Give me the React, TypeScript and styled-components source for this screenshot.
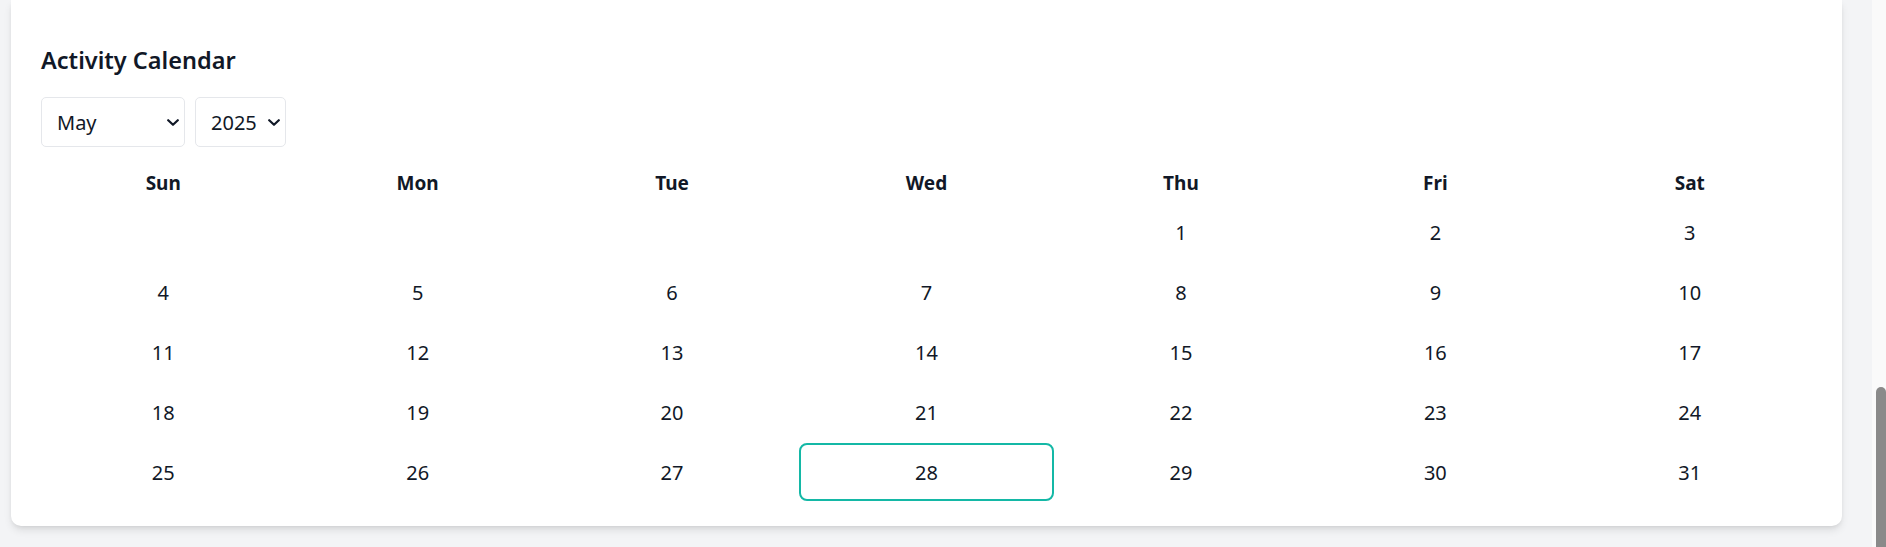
import React from "react";
import styled, { createGlobalStyle } from "styled-components";

const GlobalStyle = createGlobalStyle`
  html, body {
    margin: 0;
    padding: 0;
    background: #f3f4f6;
    overflow: hidden;
  }
  body {
    font-family: "Noto Sans", "Open Sans", Arial, sans-serif;
    color: #111827;
  }
  * { box-sizing: border-box; }
`;

const Page = styled.div`
  display: flex;
  height: 100vh;
  width: 100vw;
`;

const Main = styled.main`
  flex: 1;
  display: flex;
  flex-direction: column;
  justify-content: flex-end;
  padding: 0 30px 21px 11px;
`;

const Card = styled.section`
  background: #ffffff;
  border-radius: 0 0 10px 10px;
  box-shadow: 0 5px 8px -1px rgba(0, 0, 0, 0.1), 0 2px 5px -2px rgba(0, 0, 0, 0.1);
  padding: 45px 25px 25px;
`;

const Controls = styled.div`
  padding: 0 5px;
`;

const Title = styled.h2`
  margin: 0;
  font-size: 23.5px;
  line-height: 30px;
  font-weight: 600;
  color: #111827;
`;

const SelectRow = styled.div`
  display: flex;
  gap: 10px;
  margin-top: 22px;
`;

const SelectWrap = styled.div<{ $w: number }>`
  position: relative;
  width: ${(p) => p.$w}px;
  height: 50px;
`;

const Select = styled.select`
  appearance: none;
  -webkit-appearance: none;
  width: 100%;
  height: 100%;
  border: 1px solid #e5e7eb;
  border-radius: 5px;
  background: #ffffff;
  padding: 0 0 0 15px;
  font-family: "Noto Sans", "Open Sans", Arial, sans-serif;
  font-size: 20px;
  color: #111827;
  outline: none;
`;

const Chevron = styled.svg<{ $right: number }>`
  position: absolute;
  right: ${(p) => p.$right}px;
  top: 50%;
  margin-top: -3px;
  pointer-events: none;
`;

const Grid = styled.div`
  display: grid;
  grid-template-columns: repeat(7, 1fr);
  row-gap: 2px;
  margin-top: 16px;
`;

const HeadCell = styled.div`
  height: 38px;
  padding-top: 2px;
  display: flex;
  align-items: center;
  justify-content: center;
  font-size: 19px;
  font-weight: 700;
  color: #111827;
`;

const DayCell = styled.div<{ $today?: boolean }>`
  height: 58px;
  display: flex;
  align-items: center;
  justify-content: center;
  font-size: 20px;
  color: #111827;
  border: 2px solid ${(p) => (p.$today ? "#14b8a6" : "transparent")};
  border-radius: 8px;
`;

const ScrollTrack = styled.div`
  width: 14px;
  background: #fafafa;
  display: flex;
  flex-direction: column;
  align-items: flex-end;
  padding-top: 387px;
`;

const ScrollThumb = styled.div`
  width: 10px;
  flex: 1;
  background: #8a8a8a;
  border-radius: 5px 5px 0 0;
`;

const months = [
  "January", "February", "March", "April", "May", "June",
  "July", "August", "September", "October", "November", "December",
];
const weekdays = ["Sun", "Mon", "Tue", "Wed", "Thu", "Fri", "Sat"];

function ChevronIcon({ right }: { right: number }) {
  return (
    <Chevron $right={right} width="12" height="7" viewBox="0 0 12 7">
      <path d="M1.2 1.2 L6 5.8 L10.8 1.2" fill="none" stroke="#111827" strokeWidth="2.2" strokeLinecap="round" strokeLinejoin="round" />
    </Chevron>
  );
}

export default function App() {
  const year = 2025;
  const month = 4;
  const firstDay = new Date(year, month, 1).getDay();
  const daysInMonth = new Date(year, month + 1, 0).getDate();
  const cells: (number | null)[] = [];
  for (let i = 0; i < firstDay; i++) cells.push(null);
  for (let d = 1; d <= daysInMonth; d++) cells.push(d);

  return (
    <>
      <GlobalStyle />
      <Page>
        <Main>
          <Card>
            <Controls>
              <Title>Activity Calendar</Title>
              <SelectRow>
                <SelectWrap $w={144}>
                  <Select defaultValue="May">
                    {months.map((m) => (
                      <option key={m} value={m}>{m}</option>
                    ))}
                  </Select>
                  <ChevronIcon right={6} />
                </SelectWrap>
                <SelectWrap $w={91}>
                  <Select defaultValue="2025">
                    {[2023, 2024, 2025, 2026].map((y) => (
                      <option key={y} value={String(y)}>{y}</option>
                    ))}
                  </Select>
                  <ChevronIcon right={6} />
                </SelectWrap>
              </SelectRow>
            </Controls>
            <Grid>
              {weekdays.map((w) => (
                <HeadCell key={w}>{w}</HeadCell>
              ))}
              {cells.map((d, i) => (
                <DayCell key={i} $today={d === 28}>{d ?? ""}</DayCell>
              ))}
            </Grid>
          </Card>
        </Main>
        <ScrollTrack>
          <ScrollThumb />
        </ScrollTrack>
      </Page>
    </>
  );
}
